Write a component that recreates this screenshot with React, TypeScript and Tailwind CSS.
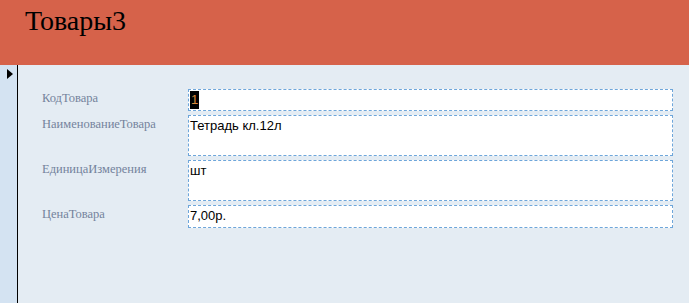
export default function App() {
  const fields = [
    { label: "КодТовара", value: "1", h: "h-[22px]", cursor: true },
    { label: "НаименованиеТовара", value: "Тетрадь кл.12л", h: "h-[41px]" },
    { label: "ЕдиницаИзмерения", value: "шт", h: "h-[41px]" },
    { label: "ЦенаТовара", value: "7,00р.", h: "h-[23px]" },
  ];

  return (
    <div className="w-[689px] h-[303px] flex flex-col overflow-hidden bg-[#e4ecf3]">
      {/* Заголовок формы */}
      <div className="h-[65px] shrink-0 bg-[#d6624a] pl-[25px] pt-[3px]">
        <h1 className="text-[28px] leading-[36px] text-black font-['Liberation_Serif',serif]">
          Товары3
        </h1>
      </div>

      <div className="flex flex-1">
        {/* Область выделения записи */}
        <div className="w-[18px] shrink-0 bg-[#d4e3f2] border-r border-black pt-[4px] pl-[7px]">
          <svg width="6" height="10" viewBox="0 0 6 10">
            <polygon points="0,0 6,5 0,10" fill="#000" />
          </svg>
        </div>

        <div className="flex flex-col gap-[4px] pt-[24px] pl-[24px]">
          {fields.map((f, i) => (
            <div key={i} className="flex">
              <div className="w-[146px] pt-[1px] text-[12.5px] leading-[16px] text-[#74839c] font-['Liberation_Serif',serif]">
                {f.label}
              </div>
              <div
                className={`w-[485px] ${f.h} bg-white border border-dashed border-[#6ea6da] pl-[1px] pt-[1px] text-[13px] leading-[17px] text-black font-['Liberation_Sans',sans-serif]`}
              >
                {f.cursor ? (
                  <span className="inline-block bg-black text-[#d98a3a] px-[1px] leading-[18px]">{f.value}</span>
                ) : (
                  f.value
                )}
              </div>
            </div>
          ))}
        </div>
      </div>
    </div>
  );
}
